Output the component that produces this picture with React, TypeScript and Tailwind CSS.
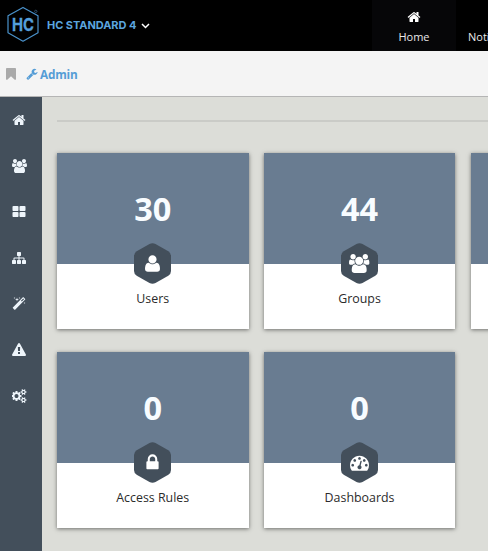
import React from "react";

type Glyph = { w: number; d: string };

const GLYPHS: Record<string, Glyph> = {
  home: {
    w: 1792,
    d: "M1472 992v480q0 26-19 45t-45 19h-384v-384h-256v384h-384q-26 0-45-19t-19-45v-480q0-1 .5-3t.5-3l575-474 575 474q1 2 1 6zm223-69l-62 74q-8 9-21 11h-3q-13 0-21-7l-692-577-692 577q-12 8-24 7-13-2-21-11l-62-74q-8-10-7-23.5t11-21.5l719-599q32-26 76-26t76 26l244 204v-195q0-14 9-23t23-9h192q14 0 23 9t9 23v408l219 182q10 8 11 21.5t-7 23.5z",
  },
  users: {
    w: 1920,
    d: "M593 896q-162 5-265 128h-134q-82 0-138-40.5t-56-118.5q0-353 124-353 6 0 43.5 21t97.5 42.5 119 21.5q67 0 133-23-5 37-5 66 0 139 81 256zm1071 637q0 120-73 189.5t-194 69.5h-874q-121 0-194-69.5t-73-189.5q0-53 3.5-103.5t14-109 26.5-108.5 43-97.5 62-81 85.5-53.5 111.5-20q10 0 43 21.5t73 48 107 48 135 21.5 135-21.5 107-48 73-48 43-21.5q61 0 111.5 20t85.5 53.5 62 81 43 97.5 26.5 108.5 14 109 3.5 103.5zm-1024-1277q0 106-75 181t-181 75-181-75-75-181 75-181 181-75 181 75 75 181zm704 384q0 159-112.5 271.5t-271.5 112.5-271.5-112.5-112.5-271.5 112.5-271.5 271.5-112.5 271.5 112.5 112.5 271.5zm576 225q0 78-56 118.5t-138 40.5h-134q-103-123-265-128 81-117 81-256 0-29-5-66 66 23 133 23 59 0 119-21.5t97.5-42.5 43.5-21q124 0 124 353zm-128-609q0 106-75 181t-181 75-181-75-75-181 75-181 181-75 181 75 75 181z",
  },
  tiles: {
    w: 1792,
    d: "M832 1024v384q0 52-38 90t-90 38h-512q-52 0-90-38t-38-90v-384q0-52 38-90t90-38h512q52 0 90 38t38 90zm0-768v384q0 52-38 90t-90 38h-512q-52 0-90-38t-38-90v-384q0-52 38-90t90-38h512q52 0 90 38t38 90zm896 768v384q0 52-38 90t-90 38h-512q-52 0-90-38t-38-90v-384q0-52 38-90t90-38h512q52 0 90 38t38 90zm0-768v384q0 52-38 90t-90 38h-512q-52 0-90-38t-38-90v-384q0-52 38-90t90-38h512q52 0 90 38t38 90z",
  },
  sitemap: {
    w: 1792,
    d: "M1792 1248v320q0 40-28 68t-68 28h-320q-40 0-68-28t-28-68v-320q0-40 28-68t68-28h96v-192h-512v192h96q40 0 68 28t28 68v320q0 40-28 68t-68 28h-320q-40 0-68-28t-28-68v-320q0-40 28-68t68-28h96v-192h-512v192h96q40 0 68 28t28 68v320q0 40-28 68t-68 28h-320q-40 0-68-28t-28-68v-320q0-40 28-68t68-28h96v-192q0-52 38-90t90-38h512v-192h-96q-40 0-68-28t-28-68v-320q0-40 28-68t68-28h320q40 0 68 28t28 68v320q0 40-28 68t-68 28h-96v192h512q52 0 90 38t38 90v192h96q40 0 68 28t28 68z",
  },
  magic: {
    w: 1792,
    d: "M1254 581l293-293-107-107-293 293zm447-293q0 27-18 45l-1286 1286q-18 18-45 18t-45-18l-198-198q-18-18-18-45t18-45l1286-1286q18-18 45-18t45 18l198 198q18 18 18 45zm-1351-190l98 30-98 30-30 98-30-98-98-30 98-30 30-98zm350 162l196 60-196 60-60 196-60-196-196-60 196-60 60-196zm930 478l98 30-98 30-30 98-30-98-98-30 98-30 30-98zm-640-640l98 30-98 30-30 98-30-98-98-30 98-30 30-98z",
  },
  warning: {
    w: 1792,
    d: "M1024 1375v-190q0-14-9.5-23.5t-22.5-9.5h-192q-13 0-22.5 9.5t-9.5 23.5v190q0 14 9.5 23.5t22.5 9.5h192q13 0 22.5-9.5t9.5-23.5zm-2-374l18-459q0-12-10-19-13-11-24-11h-220q-11 0-24 11-10 7-10 21l17 457q0 10 10 16.5t24 6.5h185q14 0 23.5-6.5t10.5-16.5zm-14-934l768 1408q35 63-2 126-17 29-46.5 46t-63.5 17h-1536q-34 0-63.5-17t-46.5-46q-37-63-2-126l768-1408q17-31 47-49t65-18 65 18 47 49z",
  },
  cogs: {
    w: 1920,
    d: "M832 896q0-106-75-181t-181-75-181 75-75 181 75 181 181 75 181-75 75-181zm768 512q0-52-38-90t-90-38-90 38-38 90q0 53 37.5 90.5t90.5 37.5 90.5-37.5 37.5-90.5zm0-1024q0-52-38-90t-90-38-90 38-38 90q0 53 37.5 90.5t90.5 37.5 90.5-37.5 37.5-90.5zm-384 421v185q0 10-7 19.5t-16 10.5l-155 24q-11 35-32 76 34 48 90 115 7 11 7 20 0 12-7 19-23 30-82.5 89.5t-78.5 59.5q-11 0-21-7l-115-90q-37 19-77 31-11 108-23 155-7 24-30 24h-186q-11 0-20-7.5t-10-17.5l-23-153q-34-10-75-31l-118 89q-7 7-20 7-11 0-21-8-144-133-144-160 0-9 7-19 10-14 41-53t47-61q-23-44-35-82l-152-24q-10-1-17-9.5t-7-19.5v-185q0-10 7-19.5t16-10.5l155-24q11-35 32-76-34-48-90-115-7-11-7-20 0-12 7-20 22-30 82-89t79-59q11 0 21 7l115 90q34-18 77-32 11-108 23-154 7-24 30-24h186q11 0 20 7.5t10 17.5l23 153q34 10 75 31l118-89q8-7 20-7 11 0 21 8 144 133 144 160 0 8-7 19-12 16-42 54t-45 60q23 48 34 82l152 23q10 2 17 10.5t7 19.5zm640 533v140q0 16-149 31-12 27-30 52 51 113 51 138 0 4-4 7-122 71-124 71-8 0-46-47t-52-68q-20 2-30 2t-30-2q-14 21-52 68t-46 47q-2 0-124-71-4-3-4-7 0-25 51-138-18-25-30-52-149-15-149-31v-140q0-16 149-31 13-29 30-52-51-113-51-138 0-4 4-7 4-2 35-20t59-34 30-16q8 0 46 46.5t52 67.5q20-2 30-2t30 2q51-71 92-112l6-2q4 0 124 70 4 3 4 7 0 25-51 138 17 23 30 52 149 15 149 31zm0-1024v140q0 16-149 31-12 27-30 52 51 113 51 138 0 4-4 7-122 71-124 71-8 0-46-47t-52-68q-20 2-30 2t-30-2q-14 21-52 68t-46 47q-2 0-124-71-4-3-4-7 0-25 51-138-18-25-30-52-149-15-149-31v-140q0-16 149-31 13-29 30-52-51-113-51-138 0-4 4-7 4-2 35-20t59-34 30-16q8 0 46 46.5t52 67.5q20-2 30-2t30 2q51-71 92-112l6-2q4 0 124 70 4 3 4 7 0 25-51 138 17 23 30 52 149 15 149 31z",
  },
  user: {
    w: 1792,
    d: "M1600 1405q0 120-73 189.5t-194 69.5h-874q-121 0-194-69.5t-73-189.5q0-53 3.5-103.5t14-109 26.5-108.5 43-97.5 62-81 85.5-53.5 111.5-20q9 0 42 21.5t74.5 48 108 48 133.5 21.5 133.5-21.5 108-48 74.5-48 42-21.5q61 0 111.5 20t85.5 53.5 62 81 43 97.5 26.5 108.5 14 109 3.5 103.5zm-320-893q0 159-112.5 271.5t-271.5 112.5-271.5-112.5-112.5-271.5 112.5-271.5 271.5-112.5 271.5 112.5 112.5 271.5z",
  },
  lock: {
    w: 1792,
    d: "M640 768h512v-192q0-106-75-181t-181-75-181 75-75 181v192zm832 96v576q0 40-28 68t-68 28h-960q-40 0-68-28t-28-68v-576q0-40 28-68t68-28h32v-192q0-184 132-316t316-132 316 132 132 316v192h32q40 0 68 28t28 68z",
  },
  gauge: {
    w: 1792,
    d: "M384 1152q0-53-37.5-90.5t-90.5-37.5-90.5 37.5-37.5 90.5 37.5 90.5 90.5 37.5 90.5-37.5 37.5-90.5zm192-448q0-53-37.5-90.5t-90.5-37.5-90.5 37.5-37.5 90.5 37.5 90.5 90.5 37.5 90.5-37.5 37.5-90.5zm428 481l101-382q6-26-7.5-48.5t-38.5-29.5-48 6.5-30 39.5l-101 382q-60 5-107 43.5t-63 98.5q-20 77 20 146t117 89 146-20 89-117q16-60-6-117t-72-91zm660-33q0-53-37.5-90.5t-90.5-37.5-90.5 37.5-37.5 90.5 37.5 90.5 90.5 37.5 90.5-37.5 37.5-90.5zm-640-640q0-53-37.5-90.5t-90.5-37.5-90.5 37.5-37.5 90.5 37.5 90.5 90.5 37.5 90.5-37.5 37.5-90.5zm448 192q0-53-37.5-90.5t-90.5-37.5-90.5 37.5-37.5 90.5 37.5 90.5 90.5 37.5 90.5-37.5 37.5-90.5zm320 448q0 261-141 483-19 29-54 29h-1402q-35 0-54-29-141-221-141-483 0-182 71-348t191-286 286-191 348-71 348 71 286 191 191 286 71 348z",
  },
  wrench: {
    w: 1792,
    d: "M448 1472q0-26-19-45t-45-19-45 19-19 45 19 45 45 19 45-19 19-45zm644-420l-682 682q-37 37-90 37-52 0-91-37l-106-108q-38-36-38-90 0-53 38-91l681-681q39 98 114.5 173.5t173.5 114.5zm634-435q0 39-23 106-47 134-164.5 217.5t-258.5 83.5q-185 0-316.5-131.5t-131.5-316.5 131.5-316.5 316.5-131.5q58 0 121.5 16.5t107.5 46.5q16 11 16 28t-16 28l-293 169v224l193 107q5-3 79-48.5t135.5-81 70.5-35.5q15 0 23.5 10t8.5 25z",
  },
  bookmark: {
    w: 1792,
    d: "M1420 128q23 0 44 9 33 13 52.5 41t19.5 62v1289q0 34-19.5 62t-52.5 41q-19 8-44 8-48 0-83-32l-441-424-441 424q-36 33-83 33-23 0-44-9-33-13-52.5-41t-19.5-62v-1289q0-34 19.5-62t52.5-41q21-9 44-9h1048z",
  },
};

function Icon({ name, className }: { name: string; className: string }) {
  const g = GLYPHS[name];
  return (
    <svg viewBox={`0 0 ${g.w} 1792`} className={`shrink-0 fill-current ${className}`} aria-hidden="true">
      <path d={g.d} />
    </svg>
  );
}

function Logo() {
  return (
    <svg viewBox="0 0 34 38" className="h-[38px] w-[34px] shrink-0" aria-hidden="true">
      <path
        d="M17 1.4 L32 9.8 V26.8 L17 35.2 L2 26.8 V9.8 Z"
        fill="none"
        stroke="#4a92cb"
        strokeWidth="1.2"
        strokeLinejoin="round"
      />
      <text x="6" y="25" textLength="22" lengthAdjust="spacingAndGlyphs" fill="#549fdb" stroke="#549fdb" strokeWidth="0.3" className="font-['Inter',sans-serif] text-[17px] font-bold">
        HC
      </text>
      <circle cx="29.8" cy="5.4" r="1.2" fill="none" stroke="#3c6687" strokeWidth="0.7" />
    </svg>
  );
}

function Card({ value, label, icon }: { value: string; label: string; icon: string }) {
  return (
    <div className="flex h-44 w-[191.5px] shrink-0 flex-col items-center bg-white shadow-[0_1px_4px_rgba(0,0,0,0.5)]">
      <div className="flex h-[111px] w-full justify-center bg-[#697c91] pt-[32px] text-[32.5px] leading-[47px] font-bold text-[#f8fcff]">
        {value}
      </div>
      <div className="-mt-[21px] grid h-[41px] w-[37px] place-items-center text-white">
        <svg viewBox="0 0 37 41" className="col-start-1 row-start-1 h-[41px] w-[37px]" aria-hidden="true">
          <path
            d="M15.5 1.1 Q18.5 -.4 21.5 1.1 L34.3 8.3 Q37 10 37 13 V28 Q37 31 34.3 32.7 L21.5 39.9 Q18.5 41.4 15.5 39.9 L2.7 32.7 Q0 31 0 28 V13 Q0 10 2.7 8.3 Z"
            fill="#434f5b"
          />
        </svg>
        <Icon
          name={icon}
          className={icon === "users" ? "col-start-1 row-start-1 h-[19px] w-[20.4px]" : "col-start-1 row-start-1 size-[19px]"}
        />
      </div>
      <div className="mt-[5px] text-[12.4px] leading-5 text-[#2b2b2b]">{label}</div>
    </div>
  );
}

const NAV = ["home", "users", "tiles", "sitemap", "magic", "warning", "cogs"];

export default function App() {
  return (
    <div className="flex h-[551px] w-[488px] flex-col overflow-hidden bg-[#dcddd8] font-['Open_Sans',sans-serif]">
      <header className="flex h-[51px] shrink-0 bg-black">
        <div className="flex w-[372px] shrink-0 items-start pt-[6px] pl-[6px]">
          <Logo />
          <span className="mt-[9px] ml-[7px] w-[89px] font-['Inter',sans-serif] text-[11px] leading-5 font-bold tracking-[-0.05px] whitespace-nowrap text-[#5ba5df]">
            HC STANDARD 4
          </span>
          <svg viewBox="0 0 9 6" className="mt-[17px] ml-[5px] h-[6px] w-[9px]" aria-hidden="true">
            <path d="M1 1 L4.5 4.5 L8 1" fill="none" stroke="white" strokeWidth="1.5" />
          </svg>
        </div>
        <div className="flex w-[84px] shrink-0 flex-col items-center bg-[#060608] pt-[10px] text-white">
          <Icon name="home" className="size-[14px]" />
          <span className="mt-[3px] text-[11px] leading-5 text-[#e8e8e8]">Home</span>
        </div>
        <div className="w-[84px] shrink-0 pt-[27px] pl-[12px] text-[11px] leading-5 whitespace-nowrap text-[#e8e8e8]">
          Noti
        </div>
      </header>
      <div className="flex h-[46px] shrink-0 items-center border-b border-[#b5b5b5] bg-[#f4f4f4] pl-1">
        <Icon name="bookmark" className="size-[14px] text-[#aaaaaa]" />
        <Icon name="wrench" className="ml-[8px] size-[12px] text-[#559dd6]" />
        <span className="ml-[2px] text-[11.8px] leading-5 font-bold tracking-[-0.2px] text-[#559dd6]">Admin</span>
      </div>
      <div className="flex min-h-0 flex-1">
        <nav className="flex w-[42px] shrink-0 flex-col items-center bg-[#434f5b] pr-1 text-[#eef5fb]">
          {NAV.map((n) => (
            <div key={n} className="flex h-[46px] items-center">
              <Icon name={n} className={n === "users" || n === "cogs" ? "h-[14px] w-[15px]" : "size-[14px]"} />
            </div>
          ))}
        </nav>
        <main className="min-w-0 flex-1 overflow-hidden pt-[23px] pl-[15px]">
          <div className="h-[2px] bg-[#cacbc7]" />
          <div className="mt-[31px] flex gap-[15.3px]">
            <Card value="30" label="Users" icon="user" />
            <Card value="44" label="Groups" icon="users" />
            <Card value="" label="" icon="lock" />
          </div>
          <div className="mt-[23px] flex gap-[15.3px]">
            <Card value="0" label="Access Rules" icon="lock" />
            <Card value="0" label="Dashboards" icon="gauge" />
          </div>
        </main>
      </div>
    </div>
  );
}
